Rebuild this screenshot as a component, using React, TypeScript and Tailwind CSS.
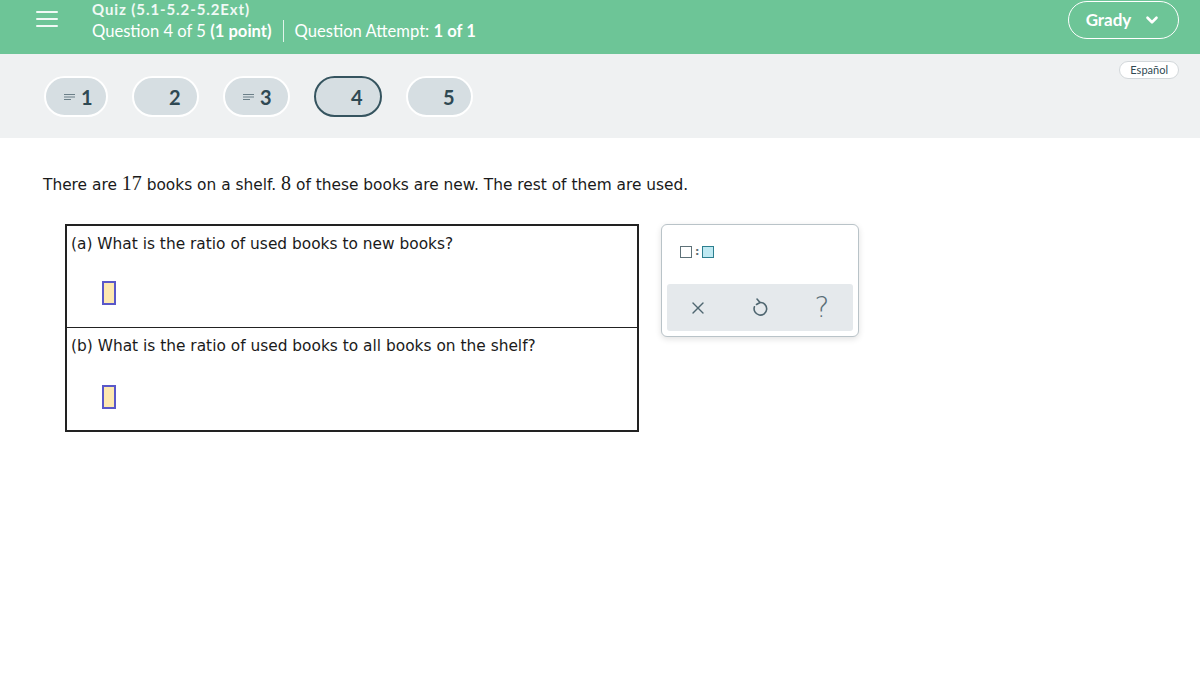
import React from "react"
import { X, ChevronDown } from "lucide-react"

const PILLS = [
  { n: 1, flagged: true, current: false, w: "w-[64px]" },
  { n: 2, flagged: false, current: false, w: "w-[67px]" },
  { n: 3, flagged: true, current: false, w: "w-[67px]" },
  { n: 4, flagged: false, current: true, w: "w-[68px]" },
  { n: 5, flagged: false, current: false, w: "w-[67px]" },
]

const HEAD = { fontFamily: "Lato, 'Open Sans', sans-serif" }
const BODY = { fontFamily: "'DejaVu Sans', Verdana, sans-serif" }
const MATH = { fontFamily: "'Liberation Serif', 'Times New Roman', serif" }

function FlagLines() {
  return (
    <svg width="12" height="8" viewBox="0 0 12 8" className="text-[#6b7f88]">
      <path d="M0 1.5h11M0 4h11M0 6.5h7" stroke="currentColor" strokeWidth="1.2" />
    </svg>
  )
}

function AnswerBox() {
  return <div className="w-[14px] h-[24px] bg-[#fde8b0] border-2 border-[#5a58c9]" />
}

// palette "undo": bowl open to the upper left with a hooked arrow on top
function UndoIcon() {
  return (
    <svg width="16" height="22" viewBox="0 0 16 22" fill="none" stroke="#4f6670" strokeWidth="1.6" strokeLinecap="round" strokeLinejoin="round">
      <path d="M5 2l3 3.5-3.5 2" />
      <path d="M8 5.5a6.3 6.3 0 1 1-5.6 4.3" />
    </svg>
  )
}

export default function App() {
  return (
    <div className="w-[1200px] h-[676px] bg-white overflow-hidden relative">
      {/* top bar */}
      <div className="h-[54px] bg-[#6dc597] flex items-start text-white" style={HEAD}>
        <div className="w-[92px] pl-[36px] pt-[11px]">
          <div className="flex flex-col gap-[5px] w-[22px]">
            <div className="h-[2px] bg-white/90 rounded" />
            <div className="h-[2px] bg-white/90 rounded" />
            <div className="h-[2px] bg-white/90 rounded" />
          </div>
        </div>
        <div className="flex flex-col">
          <div className="text-[15px] font-bold tracking-[0.9px] leading-[18px] text-white/90">Quiz (5.1-5.2-5.2Ext)</div>
          <div className="flex items-center text-[16.6px] leading-[24px] mt-[1px]">
            <span>Question 4 of 5 <b>(1 point)</b></span>
            <span className="w-px h-[22px] bg-white/80 mx-[11px]" />
            <span>Question Attempt: <b>1 of 1</b></span>
          </div>
        </div>
        <div className="ml-auto mr-[21px] mt-[1px] h-[38px] w-[111px] rounded-full border border-white flex items-center justify-center gap-[12px] text-[17px] font-bold">
          Grady
          <ChevronDown size={18} strokeWidth={3.5} />
        </div>
      </div>

      {/* question nav */}
      <div className="h-[84px] bg-[#eff1f2] flex items-start pt-[22px] pl-[44px] relative" style={HEAD}>
        <div className="flex gap-[24px]">
          {PILLS.map(p => (
            <div
              key={p.n}
              className={`${p.w} h-[41px] rounded-full bg-[#d6dee2] flex items-center pl-[18px] border-2 ${
                p.current ? "border-[#35545f]" : "border-white"
              }`}
            >
              <span className="w-[12px] flex">{p.flagged && <FlagLines />}</span>
              <span className="ml-[5px] text-[20px] font-bold text-[#2f4953]">{p.n}</span>
            </div>
          ))}
        </div>
        <div className="absolute right-[21px] top-[7px] h-[18px] px-[10px] rounded-full bg-white border border-[#d3d8db] text-[11px] text-[#2f4953] flex items-center">
          Español
        </div>
      </div>

      {/* content */}
      <div className="pl-[43px] pt-[33px] text-[15.4px] text-[#1a1a1a]" style={BODY}>
        <p className="leading-[24px]">
          There are <span className="text-[20px]" style={MATH}>17</span> books on a shelf.{" "}
          <span className="text-[20px]" style={MATH}>8</span> of these books are new. The rest of them are used.
        </p>

        <div className="flex items-start gap-[22px] mt-[27px] ml-[22px]">
          <div className="w-[574px] border-2 border-[#222]">
            <div className="h-[101px] pl-[4px] pt-[7px]">
              <div className="leading-[22px]">(a) What is the ratio of used books to new books?</div>
              <div className="ml-[31px] mt-[26px]"><AnswerBox /></div>
            </div>
            <div className="h-[103px] pl-[4px] pt-[7px] border-t-[1.5px] border-[#222]">
              <div className="leading-[22px]">(b) What is the ratio of used books to all books on the shelf?</div>
              <div className="ml-[31px] mt-[28px]"><AnswerBox /></div>
            </div>
          </div>

          <div className="w-[198px] h-[113px] rounded-[6px] border border-[#b9c3c8] bg-white shadow-[0_2px_6px_rgba(0,0,0,0.12)] p-[5px] flex flex-col">
            <div className="flex items-start gap-[3px] pl-[13px] pt-[16px] h-[54px]">
              <div className="w-[12px] h-[12px] border-[1.5px] border-[#5e7178]" />
              <span className="text-[11px] leading-[12px] font-bold text-[#5e7178]">:</span>
              <div className="w-[12px] h-[12px] border-[1.5px] border-[#2d7f8f] bg-[#bfe9f2]" />
            </div>
            <div className="mt-auto h-[47px] rounded-[3px] bg-[#e5e9ec] grid grid-cols-3 place-items-center text-[#4f6670]">
              <X size={20} strokeWidth={1.6} />
              <UndoIcon />
              <span className="text-[28px] leading-none text-[#5a6f78]" style={{ fontFamily: "'DejaVu Sans', sans-serif", fontWeight: 200 }}>?</span>
            </div>
          </div>
        </div>
      </div>
    </div>
  )
}
